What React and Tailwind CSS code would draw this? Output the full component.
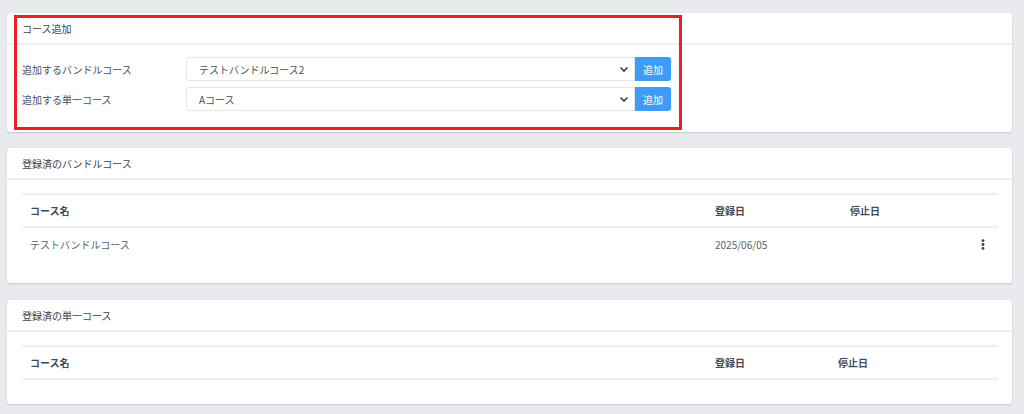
import React from 'react';

const font = { fontFamily: '"Noto Sans CJK JP", "Noto Sans", sans-serif' };

function Chevron() {
  return (
    <svg width="8" height="5" viewBox="0 0 8 5" className="shrink-0">
      <path d="M1 1l3 3 3-3" fill="none" stroke="#343a40" strokeWidth="1.6" strokeLinecap="round" />
    </svg>
  );
}

function SelectRow({ label, value }) {
  return (
    <div className="flex items-center h-[24px]">
      <div className="w-[164px] text-[10px] text-[#4a4f55]">{label}</div>
      <div className="w-[449px] h-[24px] flex items-center justify-between pl-[12px] pr-[6px] bg-white border border-[#e3e6ea] rounded-l-[3px] text-[10px] text-[#4a4f55]">
        <span>{value}</span>
        <Chevron />
      </div>
      <button className="w-[36px] h-[24px] bg-[#3d9cf7] text-white text-[10px] rounded-r-[3px]">追加</button>
    </div>
  );
}

function Card({ title, children, className = '' }) {
  return (
    <div className={`relative bg-white rounded-[3px] shadow-[0_1px_2px_rgba(0,0,0,0.15)] ${className}`}>
      <div className="h-[32px] px-[15px] flex items-center border-b-2 border-[#eef0f2] text-[10px] text-[#3d434a]">{title}</div>
      {children}
    </div>
  );
}

function CourseTable({ cols, rows }) {
  return (
    <div className="ml-[15px] mr-[14px] border-t-2 border-[#eef0f2]">
      <div className={`grid ${cols} h-[33px] items-center border-b-2 border-[#eef0f2] text-[10px] font-bold text-[#444b53]`}>
        <div className="pl-[8px]">コース名</div>
        <div className="pl-[8px]">登録日</div>
        <div className="pl-[8px]">停止日</div>
        <div></div>
      </div>
      {rows.map(r => (
        <div key={r.name} className={`grid ${cols} h-[32px] items-center text-[10px] text-[#5b6168]`}>
          <div className="pl-[8px]">{r.name}</div>
          <div className="pl-[8px]">{r.date}</div>
          <div className="pl-[8px]">{r.stop}</div>
          <div className="flex justify-center">
            <svg width="4" height="11" viewBox="0 0 4 11">
              <circle cx="2" cy="1.6" r="1.4" fill="#3a4048" />
              <circle cx="2" cy="5.5" r="1.4" fill="#3a4048" />
              <circle cx="2" cy="9.4" r="1.4" fill="#3a4048" />
            </svg>
          </div>
        </div>
      ))}
    </div>
  );
}

export default function App() {
  return (
    <div className="min-h-screen bg-[#e9eaed] pl-[7px] pr-[12px] pt-[13px] pb-[10px]" style={font}>
      {/* コース追加 */}
      <Card title="コース追加">
        <div className="px-[15px] pt-[12px] pb-[21px] flex flex-col gap-[6px]">
          <SelectRow label="追加するバンドルコース" value="テストバンドルコース2" />
          <SelectRow label="追加する単一コース" value="Aコース" />
        </div>
        <div className="absolute left-[7px] top-[2px] w-[668px] h-[115px] border-[3px] border-[#e8202a] pointer-events-none" />
      </Card>

      <Card title="登録済のバンドルコース" className="mt-[16px] pb-[23px]">
        <div className="pt-[13px]">
          <CourseTable
            cols="grid-cols-[685px_135px_1fr_30px]"
            rows={[{ name: 'テストバンドルコース', date: '2025/06/05', stop: '' }]}
          />
        </div>
      </Card>

      <Card title="登録済の単一コース" className="mt-[17px] pb-[24px]">
        <div className="pt-[13px]">
          <CourseTable cols="grid-cols-[685px_123px_1fr_30px]" rows={[]} />
        </div>
      </Card>
    </div>
  );
}
